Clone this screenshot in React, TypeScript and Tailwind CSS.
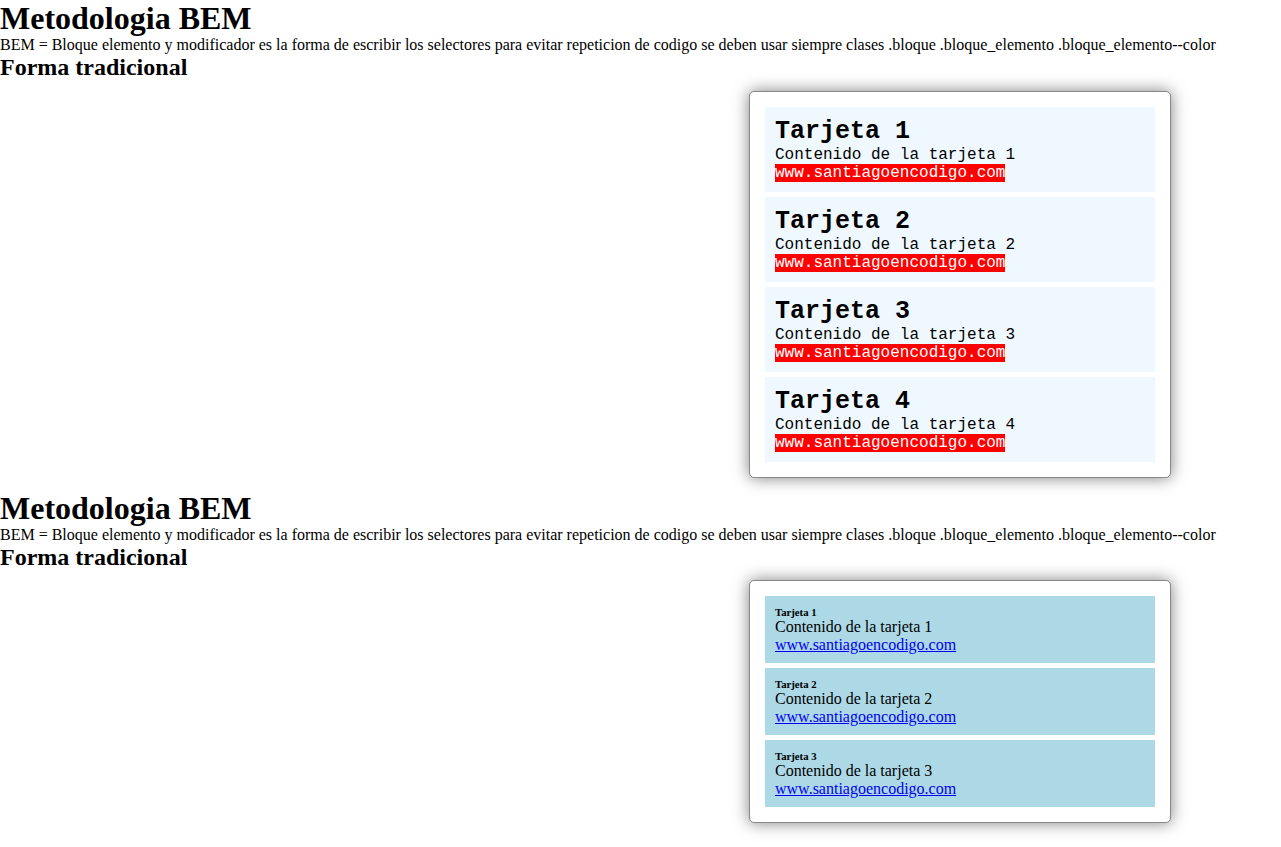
const cards = [1, 2, 3, 4];
const lightCards = [1, 2, 3];

const Intro = () => (
  <>
    <h1 className="text-[32px] font-bold leading-[36px]">Metodologia BEM</h1>
    <p className="text-base leading-[18px]">
      BEM = Bloque elemento y modificador es la forma de escribir los selectores para evitar repeticion de codigo se
      deben usar siempre clases .bloque .bloque_elemento .bloque_elemento--color
    </p>
    <h2 className="text-2xl font-bold leading-[26px]">Forma tradicional</h2>
  </>
);

const Box = ({ className, children }: { className: string; children: React.ReactNode }) => (
  <div
    className={
      "ml-[749px] flex w-[422px] flex-col gap-[5px] rounded-[5px] border border-[#888] bg-white p-[15px] shadow-[0_0_16px_rgba(0,0,0,0.5)] " +
      className
    }
  >
    {children}
  </div>
);

export default function App() {
  return (
    <div className="min-h-[847px] bg-white font-['Liberation_Serif',serif] text-black">
      <Intro />
      <Box className="mt-[11px] mb-[12px]">
        {cards.map((n) => (
          <div key={n} className="flex h-[85px] flex-col items-start bg-[#f0f8ff] px-[10px] pt-[10px] font-['Liberation_Mono',monospace]">
            <h3 className="text-[25px] font-bold leading-[29px]">Tarjeta {n}</h3>
            <p className="text-base leading-[18px]">Contenido de la tarjeta {n}</p>
            <span className="bg-[#ff0000] text-base leading-[18px] text-white">www.santiagoencodigo.com</span>
          </div>
        ))}
      </Box>
      <Intro />
      <Box className="mt-[10px]">
        {lightCards.map((n) => (
          <div key={n} className="flex h-[67px] flex-col items-start bg-[#add8e6] px-[10px] pt-[10px]">
            <h6 className="text-[10.72px] font-bold leading-[12px]">Tarjeta {n}</h6>
            <p className="text-base leading-[18px]">Contenido de la tarjeta {n}</p>
            <a href="#" className="text-base leading-[18px] text-[#0000ee] underline">
              www.santiagoencodigo.com
            </a>
          </div>
        ))}
      </Box>
    </div>
  );
}
